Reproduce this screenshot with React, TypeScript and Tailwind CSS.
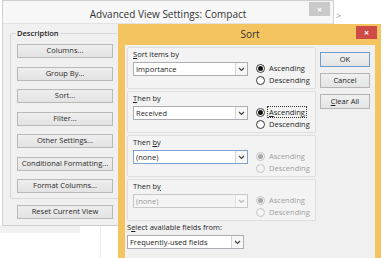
import React from 'react'

const font = "font-['Open_Sans','Noto_Sans',sans-serif]"

function Chevron({ disabled }: { disabled?: boolean }) {
  return (
    <svg width="7" height="5" viewBox="0 0 7 5">
      <path d="M1 1 L3.5 3.5 L6 1" fill="none" stroke={disabled ? '#b5b5b5' : '#444'} strokeWidth="1.2" />
    </svg>
  )
}

function Select({ value, disabled, focused, width = 'w-[115px]' }: { value: string; disabled?: boolean; focused?: boolean; width?: string }) {
  return (
    <div className={`flex h-[14px] ${width} border ${focused ? 'border-[#7da2ce]' : disabled ? 'border-[#c8c8c8]' : 'border-[#abadb3]'} ${disabled ? 'bg-[#f4f4f4]' : 'bg-white'}`}>
      <div className={`flex-1 pl-[2px] text-[7.5px] leading-[12px] ${disabled ? 'text-[#9a9a9a]' : 'text-[#1e1e1e]'}`}>{value}</div>
      <div className={`flex w-[12px] items-center justify-center border-l ${disabled ? 'border-[#e0e0e0]' : 'border-[#d4d4d4]'} bg-[#f7f7f7]`}>
        <Chevron disabled={disabled} />
      </div>
    </div>
  )
}

function Radio({ label, checked, disabled, focus }: { label: React.ReactNode; checked?: boolean; disabled?: boolean; focus?: boolean }) {
  return (
    <div className="flex h-[12px] items-center gap-[2px]">
      <div className={`flex h-[9px] w-[9px] items-center justify-center rounded-full border ${disabled ? 'border-[#c4c4c4] bg-[#f4f4f4]' : 'border-[#3a3a3a] bg-white'}`}>
        {checked && <div className={`h-[5px] w-[5px] rounded-full ${disabled ? 'bg-[#a8a8a8]' : 'bg-[#111]'}`} />}
      </div>
      <span className={`px-[1px] text-[7.5px] leading-[10px] ${disabled ? 'text-[#a0a0a0]' : 'text-[#1e1e1e]'} ${focus ? 'border border-dotted border-[#333]' : 'border border-transparent'}`}>{label}</span>
    </div>
  )
}

function SortGroup({ label, value, enabled, disabled, focused, focus }: { label: React.ReactNode; value: string; enabled?: boolean; disabled?: boolean; focused?: boolean; focus?: boolean }) {
  return (
    <div className="h-[42px] w-[189px] rounded-[2px] border border-[#dedede] bg-[#f3f3f3] pl-[5px]">
      <div className="mt-[2px] text-[7.5px] leading-[9px] text-[#1e1e1e]">{label}</div>
      <div className="mt-[3px] flex gap-[8px]">
        <Select value={value} disabled={disabled} focused={focused} />
        <div className="flex flex-col">
          <Radio label={focus ? <><u>A</u>scending</> : 'Ascending'} checked disabled={!enabled} focus={focus} />
          <Radio label="Descending" disabled={!enabled} />
        </div>
      </div>
    </div>
  )
}

function DlgButton({ children, primary }: { children: React.ReactNode; primary?: boolean }) {
  return (
    <div className={`flex h-[15px] w-[50px] items-center justify-center border ${primary ? 'border-[#6e9dcc]' : 'border-[#b4b4b4]'} bg-gradient-to-b from-[#f0f0f0] to-[#e4e4e4] text-[7.5px] text-[#1e1e1e]`}>
      {children}
    </div>
  )
}

function LeftButton({ children }: { children: React.ReactNode }) {
  return (
    <div className="flex h-[14px] w-[96px] items-center justify-center border border-[#b9b9b9] bg-gradient-to-b from-[#eeeeee] to-[#e3e3e3] text-[7.5px] text-[#2a2a2a]">
      {children}
    </div>
  )
}

export default function App() {
  return (
    <div className={`relative h-[258px] w-[383px] overflow-hidden bg-white ${font}`}>
      {/* desktop bits behind the windows */}
      <div className="absolute left-[180px] top-[-6px] text-[8px] text-[#9a9a9a]">Tue 11/17/2012 2:12 AM</div>
      <div className="absolute left-[336px] top-[9px] text-[9px] text-[#9a9a9a]">&gt;</div>
      <div className="absolute left-0 top-[226px] h-[7px] w-[80px] bg-[#f1f1f1]" />
      <div className="absolute left-[100px] top-[226px] h-[32px] w-px bg-[#ececec]" />

      {/* Advanced View Settings window */}
      <div className="absolute left-[2px] top-0 flex h-[226px] w-[332px] flex-col border border-[#cfcfcf] bg-[#f0f0f0]">
        <div className="relative flex h-[22px] items-center justify-center bg-[#f7f7f7] pt-[4px]">
          <span className="text-[10px] text-[#333]">Advanced View Settings: Compact</span>
          <div className="absolute right-[3px] top-[1px] flex h-[14px] w-[21px] items-center justify-center bg-[#c9c9c9] text-[9px] font-bold leading-none text-white">×</div>
        </div>
        <div className="flex flex-1 flex-col border-t border-[#e2e2e2] pl-[7px] pt-[5px]">
          <fieldset className="h-[170px] w-[130px] rounded-[2px] border border-[#d9d9d9] px-[6px]">
            <legend className="ml-[-1px] px-[1px] text-[7.5px] font-semibold leading-[9px] text-[#222]">Description</legend>
            <div className="mt-[6px] flex flex-col gap-[8.5px]">
              <LeftButton>Columns...</LeftButton>
              <LeftButton>Group By...</LeftButton>
              <LeftButton>Sort...</LeftButton>
              <LeftButton>Filter...</LeftButton>
              <LeftButton>Other Settings...</LeftButton>
              <LeftButton>Conditional Formatting...</LeftButton>
              <LeftButton>Format Columns...</LeftButton>
            </div>
          </fieldset>
          <div className="ml-[7px] mt-[6px]">
            <LeftButton>Reset Current View</LeftButton>
          </div>
        </div>
      </div>

      {/* Sort dialog */}
      <div className="absolute left-[118px] top-[24px] flex h-[240px] w-[263px] flex-col bg-[#f3c45f] px-[6px] pl-[7px]">
        <div className="relative flex h-[21px] items-center justify-center">
          <span className="text-[10px] text-[#333]">Sort</span>
          <div className="absolute right-[-2px] top-[2px] flex h-[13px] w-[21px] items-center justify-center bg-[#cf4b45] text-[9px] font-bold leading-none text-white">×</div>
        </div>
        <div className="flex flex-1 gap-[4px] bg-[#f0f0f0] pl-[2px] pt-[2px]">
          <div className="flex flex-col">
            <div className="flex flex-col gap-[2px]">
              <SortGroup label={<><u>S</u>ort items by</>} value="Importance" enabled />
              <SortGroup label={<><u>T</u>hen by</>} value="Received" enabled focus />
              <SortGroup label={<>Then <u>b</u>y</>} value="(none)" focused />
              <SortGroup label={<>Then b<u>y</u></>} value="(none)" disabled />
            </div>
            <div className="mt-[2px] text-[7.5px] leading-[9px] text-[#1e1e1e]">S<u>e</u>lect available fields from:</div>
            <div className="mt-[3px]">
              <Select value="Frequently-used fields" width="w-[117px]" />
            </div>
          </div>
          <div className="mt-[5px] flex flex-col gap-[6px]">
            <DlgButton primary>OK</DlgButton>
            <DlgButton>Cancel</DlgButton>
            <DlgButton><span><u>C</u>lear All</span></DlgButton>
          </div>
        </div>
      </div>
    </div>
  )
}
